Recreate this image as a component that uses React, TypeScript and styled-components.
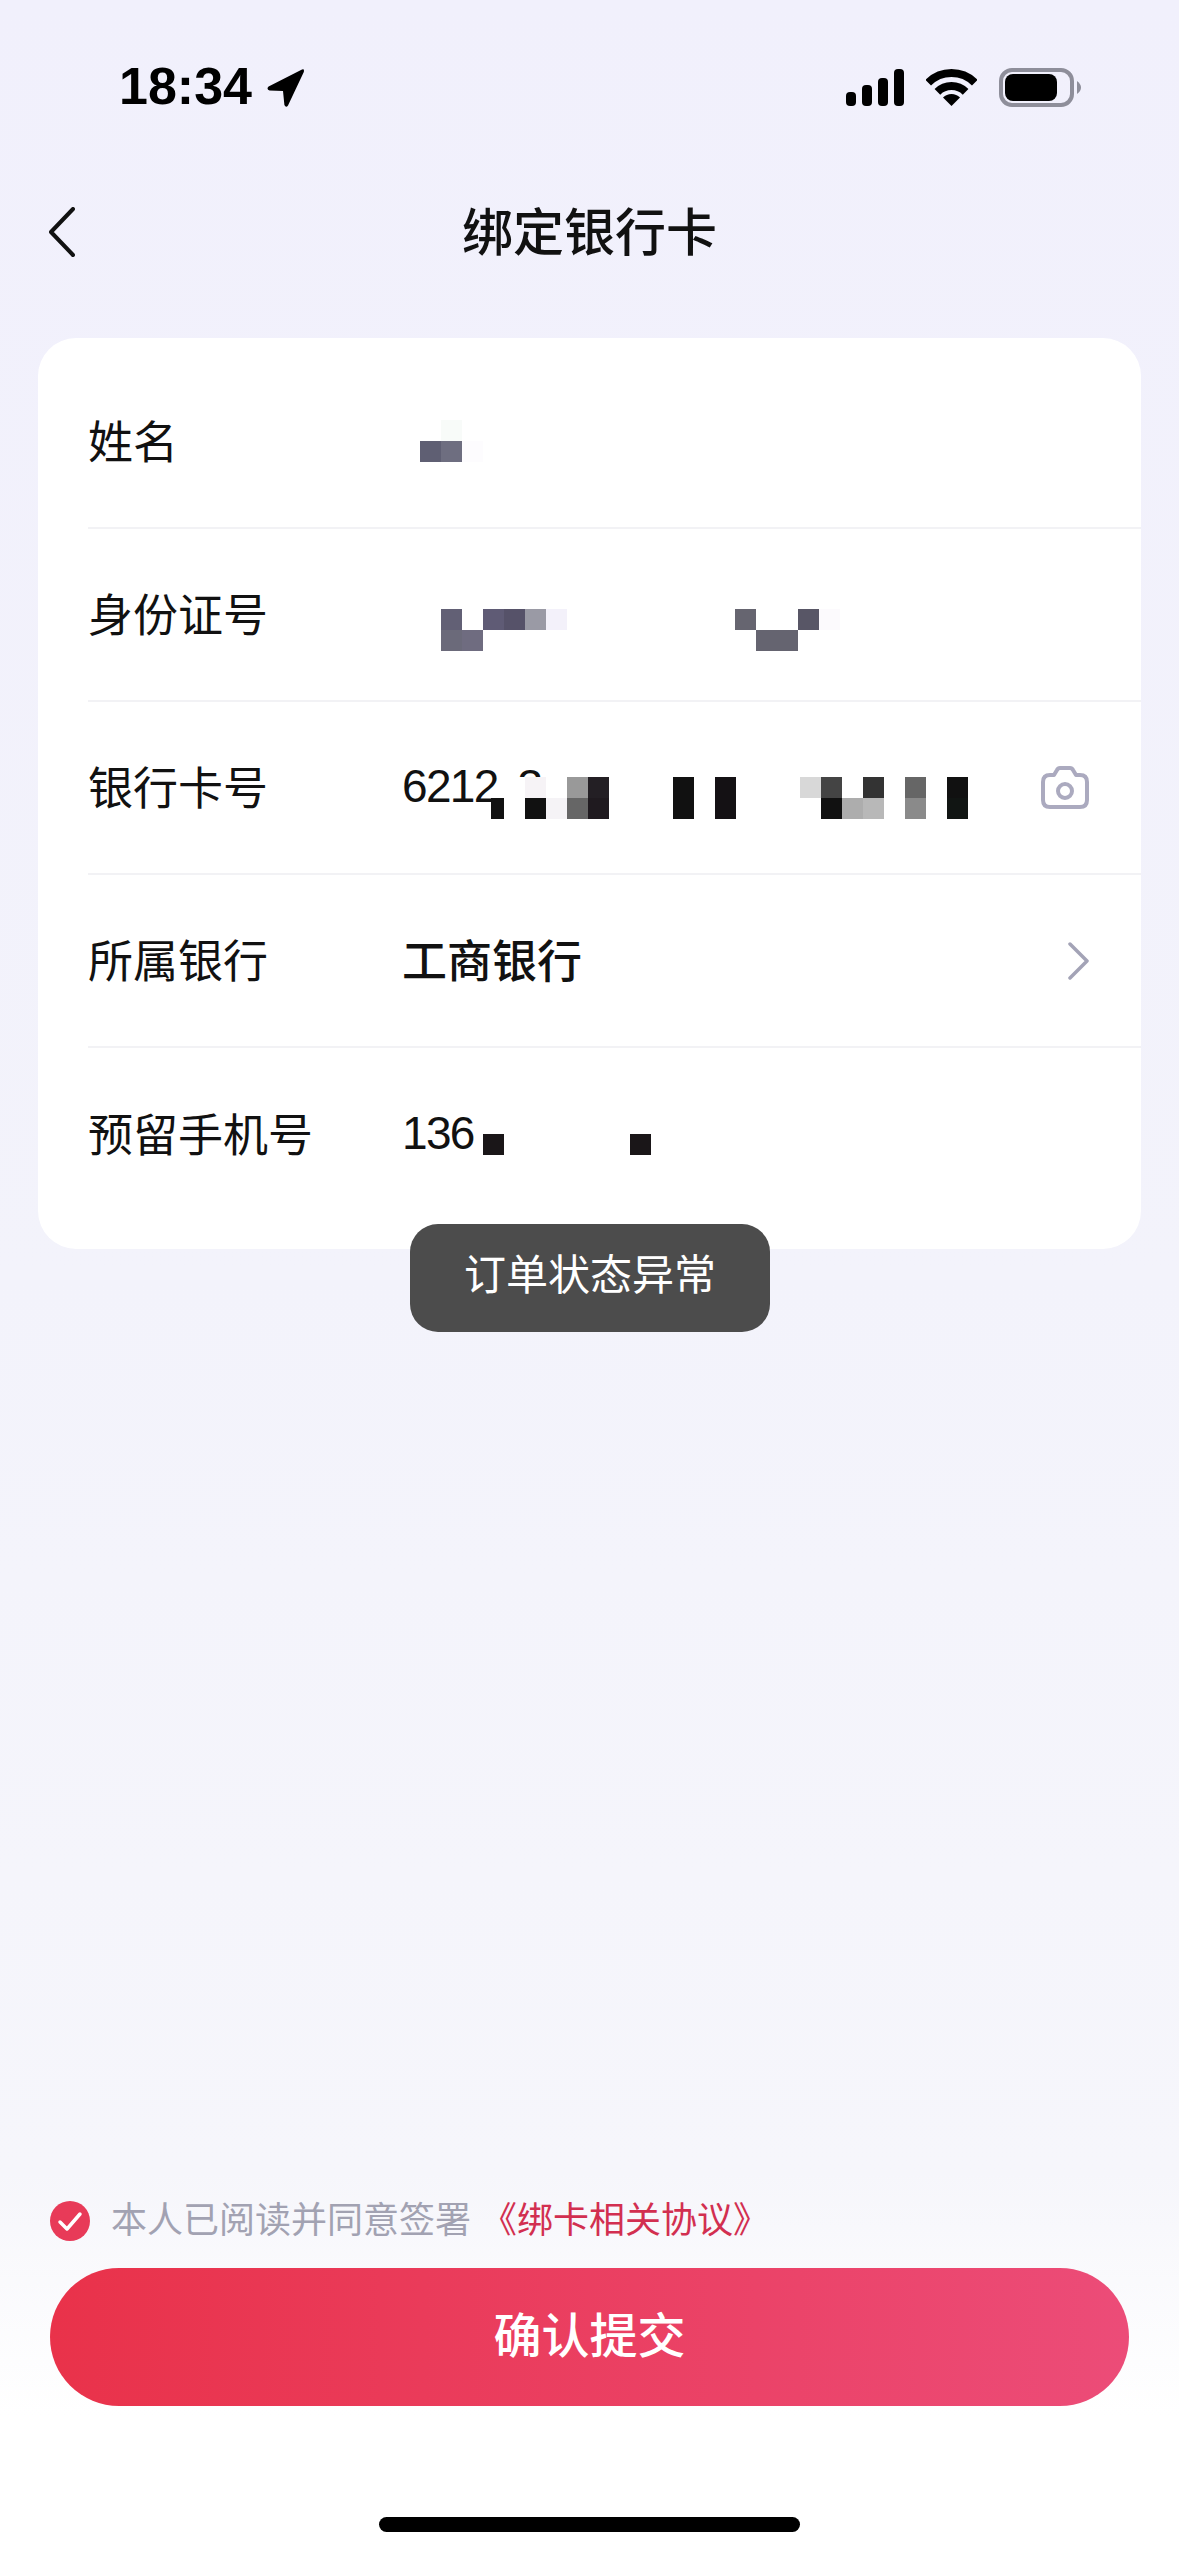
import React from 'react';
import styled, { createGlobalStyle } from 'styled-components';

const GlobalStyle = createGlobalStyle`
    html, body {
        margin: 0;
        padding: 0;
    }

    body {
        font-family: "Liberation Sans", "Noto Sans CJK SC", sans-serif;
        color: #111;
    }
`

type Cell = [x: number, y: number, fill: string, width?: number]

// redaction blocks, in page pixels
const mosaicCells: Cell[] = [
    [441, 420, '#f8fbf9'], [420, 441, '#5f5f73'], [441, 441, '#6e6e80'], [462, 441, '#fdfcfe'],

    [441, 609, '#626075'], [483, 609, '#5f5b75'], [504, 609, '#565269'], [525, 609, '#9a9aa5'], [546, 609, '#f3f1fa'],
    [441, 630, '#6b6a7a'], [462, 630, '#6f6c80'],
    [735, 609, '#666570'], [798, 609, '#585666'], [819, 609, '#fcfafd'],
    [756, 630, '#656470'], [777, 630, '#656470'],

    [504, 777, '#ffffff'], [525, 777, '#f6f3f6'], [546, 777, '#ffffff'], [567, 777, '#999999'], [588, 777, '#231f24'],
    [491, 798, '#111111', 13], [504, 798, '#ffffff'], [525, 798, '#111111'], [546, 798, '#f5f3f6'], [567, 798, '#666666'], [588, 798, '#1f1a1f'],
    [673, 777, '#111111'], [673, 798, '#111111'], [715, 777, '#141114'], [715, 798, '#141114'],
    [800, 777, '#d8d8d8'], [821, 777, '#444444'], [821, 798, '#111111'], [842, 798, '#adadad'],
    [863, 777, '#333333'], [863, 798, '#b8b8b8'],
    [905, 777, '#666666'], [905, 798, '#8a8a8a'],
    [947, 777, '#111111'], [947, 798, '#111513'],

    [483, 1134, '#1a1618'], [630, 1134, '#1a1618'],
]

const CameraIcon = () => (
    <svg width="48" height="43" viewBox="0 0 48 43" fill="none" stroke="#abaabf" strokeWidth="4" strokeLinejoin="round">
        <path d="M13 9 L16 4 Q17 2 19 2 H29 Q31 2 32 4 L35 9 H39 Q46 9 46 16 V34 Q46 41 39 41 H9 Q2 41 2 34 V16 Q2 9 9 9 Z" />
        <circle cx="24" cy="25" r="7" />
    </svg>
)

const ChevronRight = () => (
    <svg width="21" height="38" viewBox="0 0 21 38" fill="none" stroke="#a3a3b6" strokeWidth="3.5" strokeLinecap="round" strokeLinejoin="round">
        <path d="M2 2 L19 19 L2 36" />
    </svg>
)

export default function App() {
    return (
        <>
            <GlobalStyle />
            <Page>
                <StatusBar>
                    <Clock>
                        <ClockTime>18:34</ClockTime>
                        <svg width="37" height="38" viewBox="0 0 37 38" fill="#000">
                            <path d="M35 0.6 L1.6 17.6 Q-1 20 2.6 21.6 L16 22 L17.4 36 Q19 39.4 21 36.4 L36.8 3 Q37.6 -0.4 35 0.6 Z" />
                        </svg>
                    </Clock>
                    <StatusIcons>
                        <svg width="58" height="37" viewBox="0 0 58 37" fill="#000">
                            <rect x="0" y="23" width="10" height="14" rx="4" />
                            <rect x="16" y="16" width="10" height="21" rx="4" />
                            <rect x="32" y="9" width="10" height="28" rx="4" />
                            <rect x="48" y="0" width="10" height="37" rx="4" />
                        </svg>
                        <svg width="51" height="37" viewBox="0 0 51 37">
                            <path d="M2.2 13.7 A33 33 0 0 1 48.8 13.7" fill="none" stroke="#000" strokeWidth="8" />
                            <path d="M11.4 22.9 A20 20 0 0 1 39.6 22.9" fill="none" stroke="#000" strokeWidth="8" />
                            <path d="M25.5 37 L17 28.5 A12 12 0 0 1 34 28.5 Z" fill="#000" />
                        </svg>
                        <svg width="82" height="39" viewBox="0 0 82 39">
                            <rect x="2" y="2" width="71" height="35" rx="11" fill="none" stroke="#8e8e9a" strokeWidth="4" />
                            <rect x="6" y="6" width="52" height="27" rx="8" fill="#000" />
                            <path d="M78 13 Q82 16 82 19.5 Q82 23 78 26 Z" fill="#8e8e9a" />
                        </svg>
                    </StatusIcons>
                </StatusBar>

                <NavBar>
                    <BackButton>
                        <svg width="26" height="50" viewBox="0 0 26 50" fill="none" stroke="#111" strokeWidth="4" strokeLinecap="round" strokeLinejoin="round">
                            <path d="M24 2 L2 25 L24 48" />
                        </svg>
                    </BackButton>
                    <Title>绑定银行卡</Title>
                </NavBar>

                <Card>
                    <Row>
                        <Label>姓名</Label>
                    </Row>
                    <Row>
                        <Label>身份证号</Label>
                    </Row>
                    <Row>
                        <Label>银行卡号</Label>
                        <Value>6212<CardDigit>3</CardDigit></Value>
                        <RowIcon><CameraIcon /></RowIcon>
                    </Row>
                    <Row>
                        <Label>所属银行</Label>
                        <Value $strong>工商银行</Value>
                        <RowIcon><ChevronRight /></RowIcon>
                    </Row>
                    <Row>
                        <Label>预留手机号</Label>
                        <Value>136</Value>
                    </Row>
                    <Mosaic viewBox="38 338 1103 911">
                        {mosaicCells.map(([x, y, fill, width], idx) => (
                            <rect key={idx} x={x} y={y} width={width ?? 21} height={21} fill={fill} />
                        ))}
                    </Mosaic>
                </Card>

                <Toast>订单状态异常</Toast>

                <Footer>
                    <Agreement>
                        <svg width="40" height="40" viewBox="0 0 40 40">
                            <circle cx="20" cy="20" r="20" fill="#e83a58" />
                            <path d="M10 21 L17 28 L30 13" fill="none" stroke="#fff" strokeWidth="3.5" strokeLinecap="round" strokeLinejoin="round" />
                        </svg>
                        <AgreementText>本人已阅读并同意签署</AgreementText>
                        <AgreementLink>《绑卡相关协议》</AgreementLink>
                    </Agreement>
                    <SubmitButton>确认提交</SubmitButton>
                    <HomeIndicator />
                </Footer>
            </Page>
        </>
    )
}

const Page = styled.div`
    position: relative;
    box-sizing: border-box;
    width: 1179px;
    height: 2556px;
    padding: 0 38px;
    display: flex;
    flex-direction: column;
    overflow: hidden;
    background: linear-gradient(180deg, #f1f0fc 0%, #f3f3fb 50%, #f6f6fb 85%, #ffffff 94.5%);
`

const StatusBar = styled.div`
    box-sizing: border-box;
    height: 130px;
    padding: 68px 60px 0 81px;
    display: flex;
    justify-content: space-between;
    align-items: flex-start;
`

const Clock = styled.div`
    display: flex;
    align-items: center;
    gap: 15px;
    height: 39px;
    font-size: 52px;
    font-weight: 700;
    color: #000;
`

const ClockTime = styled.span`
    padding-bottom: 3px;
`

const StatusIcons = styled.div`
    display: flex;
    align-items: center;
    gap: 22px;
    height: 39px;
`

const NavBar = styled.div`
    position: relative;
    height: 200px;
    margin-bottom: 8px;
    display: flex;
    align-items: center;
    justify-content: center;
`

const BackButton = styled.div`
    position: absolute;
    left: 11px;
    top: 77px;
    line-height: 0;
`

const Title = styled.div`
    padding-bottom: 3px;
    font-size: 51px;
    font-weight: 500;
    color: #111;
`

const Card = styled.div`
    position: relative;
    box-sizing: border-box;
    height: 911px;
    padding: 18px 0 28px 50px;
    background: #fff;
    border-radius: 38px;
    overflow: hidden;
`

const Row = styled.div`
    box-sizing: border-box;
    height: 173px;
    padding-right: 52px;
    display: flex;
    align-items: center;
    border-bottom: 2px solid #f2f2f5;

    &:nth-last-child(2) {
        border-bottom: none;
    }
`

const Label = styled.div`
    width: 314px;
    flex-shrink: 0;
    padding-bottom: 5px;
    font-size: 45px;
    color: #111;
`

const Value = styled.div<{ $strong?: boolean }>`
    flex: 1;
    padding-bottom: 4px;
    font-size: ${({ $strong }) => ($strong ? '45px' : '46px')};
    font-weight: ${({ $strong }) => ($strong ? 500 : 400)};
    letter-spacing: ${({ $strong }) => ($strong ? 0 : '-1.7px')};
    color: #111;
`

const CardDigit = styled.span`
    margin-left: 20px;
`

const RowIcon = styled.div`
    line-height: 0;
`

const Mosaic = styled.svg`
    position: absolute;
    inset: 0;
    width: 100%;
    height: 100%;
    pointer-events: none;
`

const Toast = styled.div`
    position: absolute;
    left: 410px;
    top: 1224px;
    box-sizing: border-box;
    width: 360px;
    height: 108px;
    padding-bottom: 13px;
    display: flex;
    align-items: center;
    justify-content: center;
    background: #4c4c4c;
    border-radius: 28px;
    font-size: 42px;
    color: #fff;
`

const Footer = styled.div`
    margin-top: auto;
    padding: 0 12px 24px 12px;
    display: flex;
    flex-direction: column;
`

const Agreement = styled.div`
    display: flex;
    align-items: center;
    height: 40px;
    gap: 21px;
    margin-bottom: 27px;
`

const AgreementText = styled.span`
    padding-bottom: 9px;
    font-size: 36px;
    color: #a2a2b2;
`

const AgreementLink = styled.span`
    padding-bottom: 9px;
    margin-left: -11px;
    font-size: 36px;
    color: #d22f50;
`

const SubmitButton = styled.div`
    box-sizing: border-box;
    height: 138px;
    padding-bottom: 11px;
    display: flex;
    align-items: center;
    justify-content: center;
    border-radius: 69px;
    background: linear-gradient(90deg, #e9324a 0%, #ec4c78 100%);
    font-size: 48px;
    font-weight: 500;
    color: #fff;
`

const HomeIndicator = styled.div`
    align-self: center;
    width: 421px;
    height: 15px;
    margin-top: 111px;
    background: #000;
    border-radius: 8px;
`
